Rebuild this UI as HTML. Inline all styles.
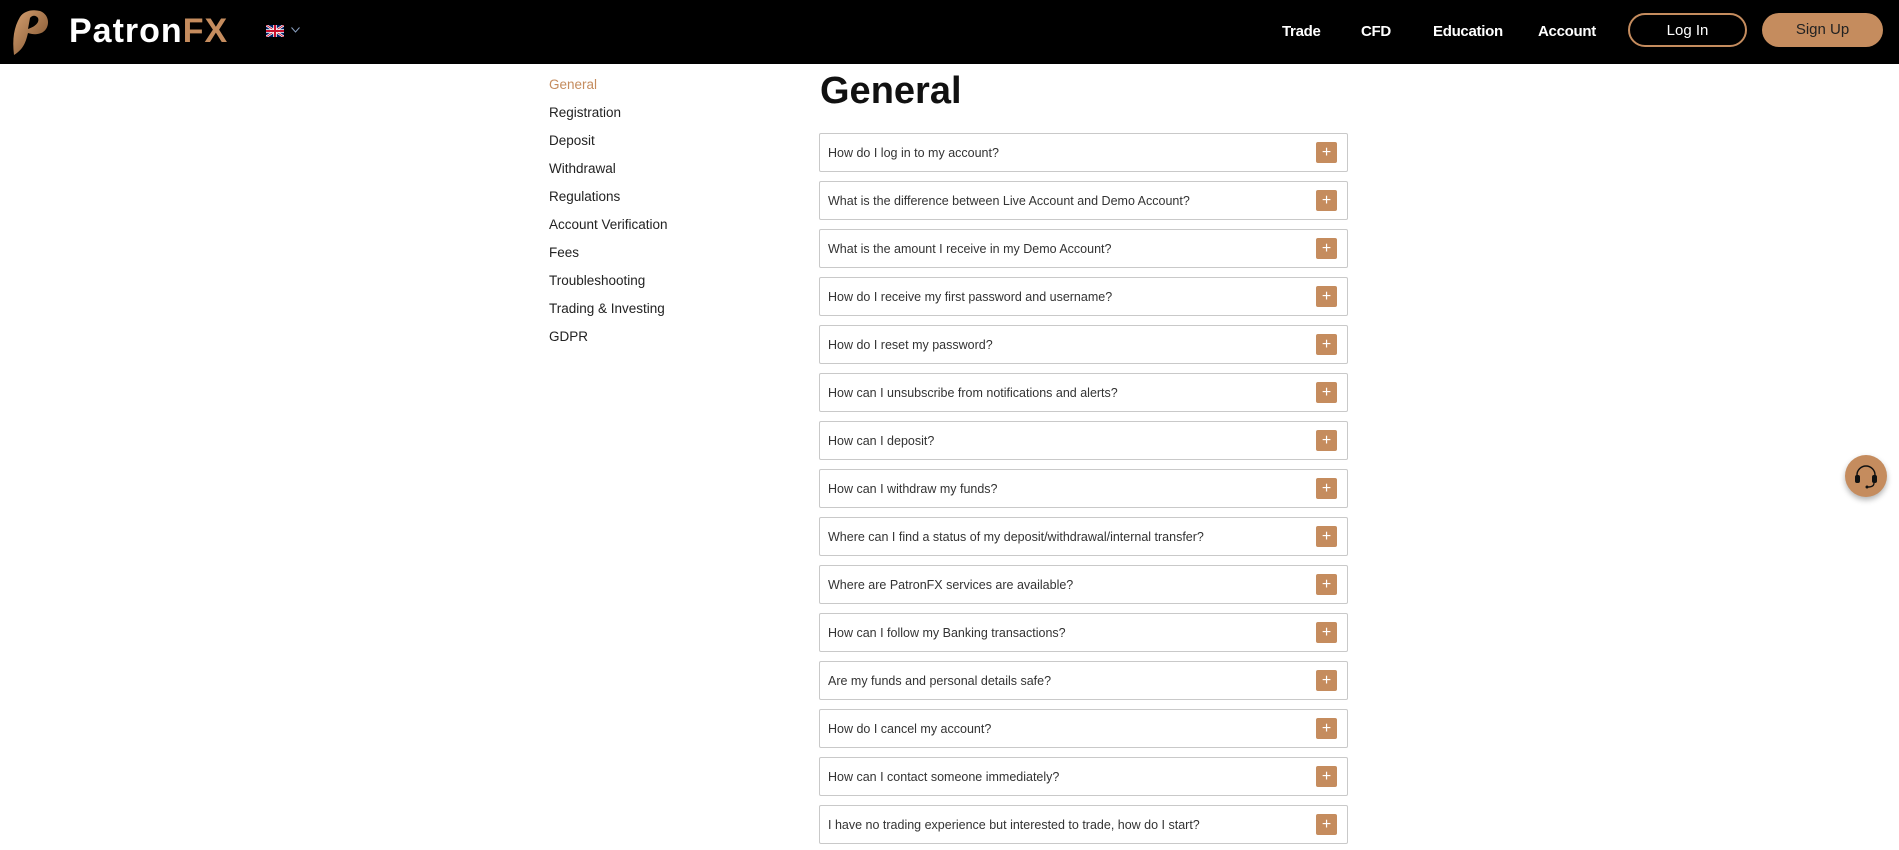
<!DOCTYPE html>
<html><head><meta charset="utf-8"><style>
*{margin:0;padding:0;box-sizing:border-box}
body{width:1899px;height:850px;overflow:hidden;background:#fff;font-family:"Liberation Sans",sans-serif;position:relative}
.hdr{position:absolute;left:0;top:0;width:1899px;height:64px;background:#000}
.nav{position:absolute;top:23px;color:#fff;font-size:15px;font-weight:bold;letter-spacing:-0.3px}
.btn{position:absolute;top:13px;height:34px;border-radius:17px;font-size:15px;text-align:center;line-height:32px}
.side{position:absolute;left:549px;font-size:13.5px;color:#222}
h1{position:absolute;left:820px;top:70px;font-size:38px;font-weight:bold;color:#111}
.q{position:absolute;left:819px;width:529px;height:39px;border:1px solid #c9c9c9;border-radius:2px;font-size:12.5px;color:#333;line-height:39px;padding-left:8px;letter-spacing:0}
.q b{position:absolute;right:10px;top:8px;width:21px;height:21px;background:#c58c5e;border-radius:2px;color:#fff;font-weight:normal;font-size:16px;line-height:21px;text-align:center}
</style></head><body>
<div class="hdr">
<svg style="position:absolute;left:10px;top:9px" width="40" height="46" viewBox="0 0 40 46"><defs><linearGradient id="g" x1="0" y1="0" x2="1" y2="1"><stop offset="0" stop-color="#d6a070"/><stop offset="1" stop-color="#7a4f2c"/></linearGradient></defs><path d="M4 46 C2 30 4 18 10 8 C14 2 22 0 30 2 C38 5 40 14 36 20 C32 26 24 26 18 24 C16 32 14 40 4 46Z M18 20 C24 18 30 14 28 9 C26 6 22 6 20 9 Z" fill="url(#g)" fill-rule="evenodd"/></svg>
<div style="position:absolute;left:69px;top:12px;font-size:34px;font-weight:bold;color:#fff;letter-spacing:1px">Patron<span style="color:#c58c5e">FX</span></div>
<svg style="position:absolute;left:266px;top:25px" width="18" height="12" viewBox="0 0 60 40"><rect width="60" height="40" fill="#012169"/><path d="M0 0L60 40M60 0L0 40" stroke="#fff" stroke-width="8"/><path d="M0 0L60 40M60 0L0 40" stroke="#C8102E" stroke-width="3"/><path d="M30 0V40M0 20H60" stroke="#fff" stroke-width="12"/><path d="M30 0V40M0 20H60" stroke="#C8102E" stroke-width="7"/></svg>
<svg style="position:absolute;left:291px;top:27px" width="9" height="6" viewBox="0 0 9 6"><path d="M0.5 0.5L4.5 5L8.5 0.5" stroke="#8aa0c0" fill="none"/></svg>
<div class="nav" style="left:1282px">Trade</div>
<div class="nav" style="left:1361px">CFD</div>
<div class="nav" style="left:1433px">Education</div>
<div class="nav" style="left:1538px">Account</div>
<div class="btn" style="left:1628px;width:119px;border:2px solid #c58c5e;color:#fff">Log In</div>
<div class="btn" style="left:1762px;width:121px;background:#c58c5e;color:#222;line-height:34px">Sign Up</div>
</div>
<div class="side" style="top:77px;color:#c58c5e">General</div>
<div class="side" style="top:105px">Registration</div>
<div class="side" style="top:133px">Deposit</div>
<div class="side" style="top:161px">Withdrawal</div>
<div class="side" style="top:189px">Regulations</div>
<div class="side" style="top:217px">Account Verification</div>
<div class="side" style="top:245px">Fees</div>
<div class="side" style="top:273px">Troubleshooting</div>
<div class="side" style="top:301px">Trading &amp; Investing</div>
<div class="side" style="top:329px">GDPR</div>
<h1>General</h1>
<div class="q" style="top:133px">How do I log in to my account?<b>+</b></div>
<div class="q" style="top:181px">What is the difference between Live Account and Demo Account?<b>+</b></div>
<div class="q" style="top:229px">What is the amount I receive in my Demo Account?<b>+</b></div>
<div class="q" style="top:277px">How do I receive my first password and username?<b>+</b></div>
<div class="q" style="top:325px">How do I reset my password?<b>+</b></div>
<div class="q" style="top:373px">How can I unsubscribe from notifications and alerts?<b>+</b></div>
<div class="q" style="top:421px">How can I deposit?<b>+</b></div>
<div class="q" style="top:469px">How can I withdraw my funds?<b>+</b></div>
<div class="q" style="top:517px">Where can I find a status of my deposit/withdrawal/internal transfer?<b>+</b></div>
<div class="q" style="top:565px">Where are PatronFX services are available?<b>+</b></div>
<div class="q" style="top:613px">How can I follow my Banking transactions?<b>+</b></div>
<div class="q" style="top:661px">Are my funds and personal details safe?<b>+</b></div>
<div class="q" style="top:709px">How do I cancel my account?<b>+</b></div>
<div class="q" style="top:757px">How can I contact someone immediately?<b>+</b></div>
<div class="q" style="top:805px">I have no trading experience but interested to trade, how do I start?<b>+</b></div>
<div style="position:absolute;left:1845px;top:455px;width:42px;height:42px;border-radius:50%;background:#c58c5e;box-shadow:0 3px 6px rgba(0,0,0,.3)">
<svg width="42" height="42" viewBox="0 0 42 42"><path d="M12 23V20a9 9 0 0 1 18 0v3" stroke="#111" stroke-width="1.5" fill="none"/><rect x="10" y="20" width="5" height="8" rx="2" fill="#111"/><rect x="27" y="20" width="5" height="8" rx="2" fill="#111"/><path d="M29 28q0 4-6 4" stroke="#111" stroke-width="1.3" fill="none"/><circle cx="22" cy="32" r="1.5" fill="#111"/></svg></div>
</body></html>
